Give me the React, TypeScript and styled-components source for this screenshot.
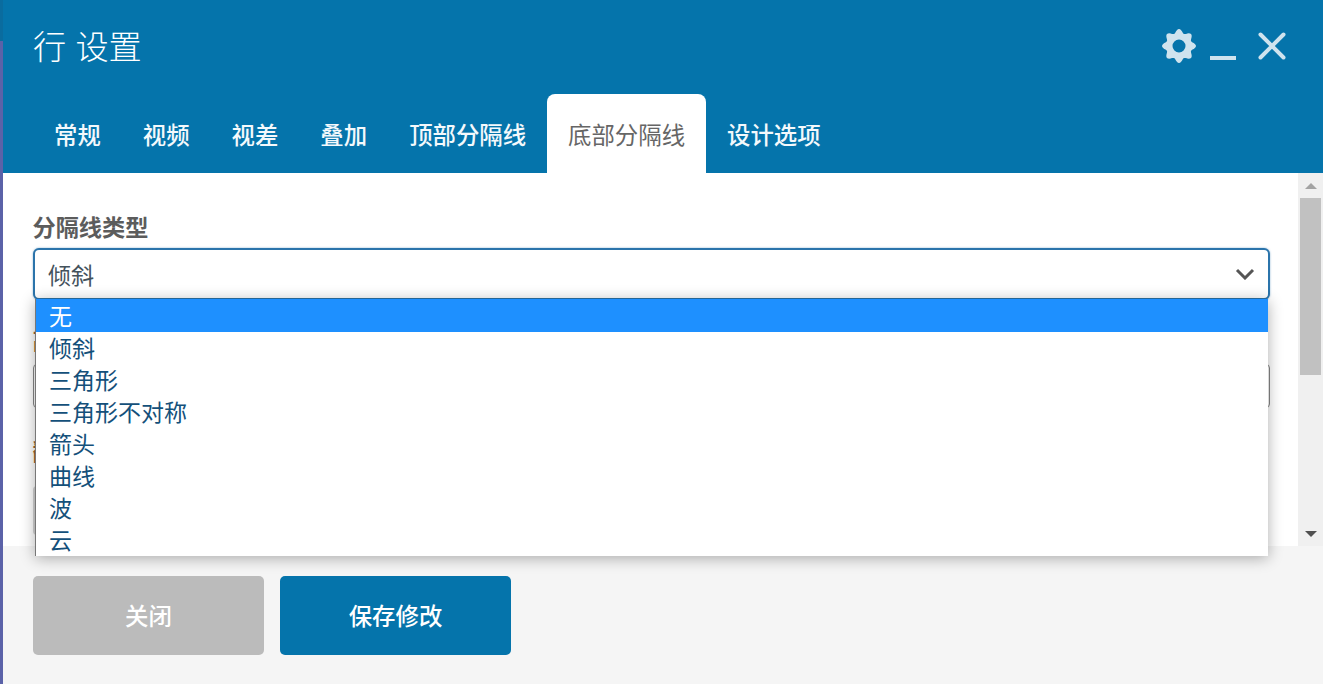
import React from 'react'
import styled, { createGlobalStyle } from 'styled-components'

const GlobalStyle = createGlobalStyle`
  html, body {
    margin: 0;
    height: 100%;
    overflow: hidden;
    background: #fff;
    font-family: 'Liberation Sans', 'Noto Sans CJK SC', sans-serif;
  }
  #root {
    height: 100%;
  }
`

const tabs = ['常规', '视频', '视差', '叠加', '顶部分隔线', '底部分隔线', '设计选项']
const dividerTypes = ['无', '倾斜', '三角形', '三角形不对称', '箭头', '曲线', '波', '云']

// wavy outline with 8 bumps, the round hole is cut by evenodd
const gearPath = () => {
  const points: string[] = []
  for (let i = 0; i < 96; i++) {
    const angle = (i / 96) * Math.PI * 2
    const radius = 15 + 2 * Math.cos(angle * 8)
    points.push(`${(17 + radius * Math.sin(angle)).toFixed(2)} ${(17 - radius * Math.cos(angle)).toFixed(2)}`)
  }
  const hole = 'M17 10.5a6.5 6.5 0 1 0 0 13a6.5 6.5 0 1 0 0-13Z'
  return `M${points.join('L')}Z${hole}`
}

const App = () => {
  return (
    <Page>
      <GlobalStyle />
      <EdgeStrip />
      <Modal>
        <Header>
          <TitleRow>
            <Title>行 设置</Title>
            <HeaderIcons>
              <IconButton width="34" height="34" viewBox="0 0 34 34">
                <path d={gearPath()} fill="currentColor" fillRule="evenodd" />
              </IconButton>
              <MinimizeBar />
              <IconButton width="28" height="28" viewBox="0 0 28 28">
                <path d="M2.5 2.5L25.5 25.5M25.5 2.5L2.5 25.5" stroke="currentColor" strokeWidth="4" strokeLinecap="round" />
              </IconButton>
            </HeaderIcons>
          </TitleRow>
          <TabRow>
            {tabs.map(el => (
              <Tab key={el} $active={el === '底部分隔线'}>
                {el}
              </Tab>
            ))}
          </TabRow>
        </Header>

        <Body>
          <Content>
            <Field>
              <FieldLabel>分隔线类型</FieldLabel>
              <SelectWrap>
                <SelectBox>
                  <span>倾斜</span>
                  <svg width="20" height="12" viewBox="0 0 20 12">
                    <path d="M2 2L10 10L18 2" fill="none" stroke="#555" strokeWidth="3" />
                  </svg>
                </SelectBox>
                <OptionList>
                  {dividerTypes.map((el, i) => (
                    <Option key={el} $selected={i === 0}>
                      {el}
                    </Option>
                  ))}
                </OptionList>
              </SelectWrap>
            </Field>
            <SecondField>
              <HiddenLabel>高度</HiddenLabel>
              <TextField />
            </SecondField>
            <ThirdField>
              <HiddenLabel>翻转</HiddenLabel>
              <LightField />
            </ThirdField>
          </Content>
          <Scrollbar>
            <ArrowSlot>
              <ArrowUp />
            </ArrowSlot>
            <Thumb />
            <ArrowSlotBottom>
              <ArrowDown />
            </ArrowSlotBottom>
          </Scrollbar>
        </Body>

        <Footer>
          <FooterButton $color="#bbbbbb">关闭</FooterButton>
          <FooterButton $color="#0574ab">保存修改</FooterButton>
        </Footer>
      </Modal>
    </Page>
  )
}

const Page = styled.div`
  display: flex;
  width: 1323px;
  height: 684px;
  overflow: hidden;
`

const EdgeStrip = styled.div`
  flex: 0 0 3px;
  background: linear-gradient(#0a6c9f 0, #0a6c9f 41px, #5b62a8 41px);
`

const Modal = styled.div`
  flex: 1;
  display: flex;
  flex-direction: column;
  min-width: 0;
`

const Header = styled.header`
  height: 173px;
  background: #0574ab;
  display: flex;
  flex-direction: column;
  color: #fff;
`

const TitleRow = styled.div`
  height: 94px;
  display: flex;
  justify-content: space-between;
  padding: 0 37px 0 30px;
  box-sizing: border-box;
`

const Title = styled.h1`
  margin: 0;
  padding-top: 24px;
  font-size: 33.2px;
  line-height: 48px;
  font-weight: 300;
`

const HeaderIcons = styled.div`
  display: flex;
  align-items: flex-start;
  padding-top: 29px;
  color: #cfe3ee;
`

const IconButton = styled.svg`
  display: block;
  flex: none;
  &:last-child {
    margin-top: 3px;
    margin-left: 22px;
  }
`

const MinimizeBar = styled.div`
  width: 26px;
  height: 4px;
  margin: 27px 0 0 14px;
  background: currentColor;
`

const TabRow = styled.nav`
  flex: 1;
  display: flex;
  padding-left: 30px;
`

const Tab = styled.div<{ $active: boolean }>`
  padding: 0 21px;
  display: flex;
  align-items: center;
  font-size: 23.4px;
  font-weight: ${props => (props.$active ? 400 : 500)};
  color: ${props => (props.$active ? '#666666' : '#f4f9fc')};
  background: ${props => (props.$active ? '#ffffff' : 'transparent')};
  border-radius: 8px 8px 0 0;
`

const Body = styled.main`
  height: 373px;
  display: flex;
  background: #fff;
  position: relative;
  z-index: 1;
`

const Content = styled.div`
  flex: 1;
  min-width: 0;
  padding: 40px 28px 0 30px;
`

const Field = styled.div`
  display: flex;
  flex-direction: column;
`

const SecondField = styled(Field)`
  margin-top: 26px;
`

const ThirdField = styled(Field)`
  margin-top: 29px;
`

const FieldLabel = styled.label`
  font-size: 23.2px;
  line-height: 30px;
  font-weight: 700;
  color: #5c5c5c;
  margin-bottom: 5px;
  margin-left: -0.5px;
`

const HiddenLabel = styled(FieldLabel)`
  color: #a0622d;
  margin-bottom: 8px;

  ${ThirdField} & {
    margin-bottom: 19px;
  }
`

const SelectWrap = styled.div`
  position: relative;
`

const SelectBox = styled.div`
  height: 52px;
  box-sizing: border-box;
  border: 2px solid #2b74ab;
  border-radius: 6px;
  box-shadow: 0 0 2px rgba(43, 116, 171, 0.6);
  display: flex;
  align-items: center;
  justify-content: space-between;
  padding: 0 13px 0 13px;
  font-size: 23px;
  color: #44525c;
  background: #fff;
`

const OptionList = styled.ul`
  position: absolute;
  left: 2px;
  top: 51px;
  width: 1233px;
  height: 257px;
  margin: 0;
  padding: 0;
  list-style: none;
  overflow: hidden;
  background: #fff;
  box-sizing: border-box;
  border-left: 1px solid #777;
  box-shadow: 0 2px 14px rgba(0, 0, 0, 0.32);
  z-index: 2;
`

const Option = styled.li<{ $selected: boolean }>`
  height: ${props => (props.$selected ? '33px' : '32px')};
  line-height: ${props => (props.$selected ? '36px' : '34px')};
  padding-left: 13px;
  font-size: 23px;
  color: ${props => (props.$selected ? '#ffffff' : '#14507a')};
  background: ${props => (props.$selected ? '#1e90ff' : 'transparent')};
`

const TextField = styled.div`
  height: 44px;
  box-sizing: border-box;
  border: 1px solid #888;
  border-radius: 4px;
`

const LightField = styled.div`
  height: 49px;
  box-sizing: border-box;
  border-left: 2px solid #d4d4d4;
  border-radius: 4px;
`

const Scrollbar = styled.div`
  flex: 0 0 25px;
  display: flex;
  flex-direction: column;
  align-items: center;
  background: #f0f0f0;
`

const ArrowSlot = styled.div`
  flex: 0 0 25px;
  display: flex;
  align-items: center;
  justify-content: center;
`

const ArrowSlotBottom = styled(ArrowSlot)`
  margin-top: auto;
`

const ArrowUp = styled.div`
  width: 0;
  height: 0;
  border-left: 6px solid transparent;
  border-right: 6px solid transparent;
  border-bottom: 6px solid #a3a3a3;
`

const ArrowDown = styled.div`
  width: 0;
  height: 0;
  border-left: 6px solid transparent;
  border-right: 6px solid transparent;
  border-top: 6px solid #505050;
`

const Thumb = styled.div`
  width: 21px;
  height: 177px;
  background: #c1c1c1;
`

const Footer = styled.footer`
  flex: 1;
  display: flex;
  gap: 16px;
  padding: 30px 30px 0;
  background: #f5f5f5;
`

const FooterButton = styled.button<{ $color: string }>`
  width: 231px;
  height: 79px;
  padding-bottom: 3px;
  border: 0;
  border-radius: 5px;
  background: ${props => props.$color};
  color: #fff;
  font-family: inherit;
  font-size: 23.4px;
  font-weight: 500;
`

export default App
